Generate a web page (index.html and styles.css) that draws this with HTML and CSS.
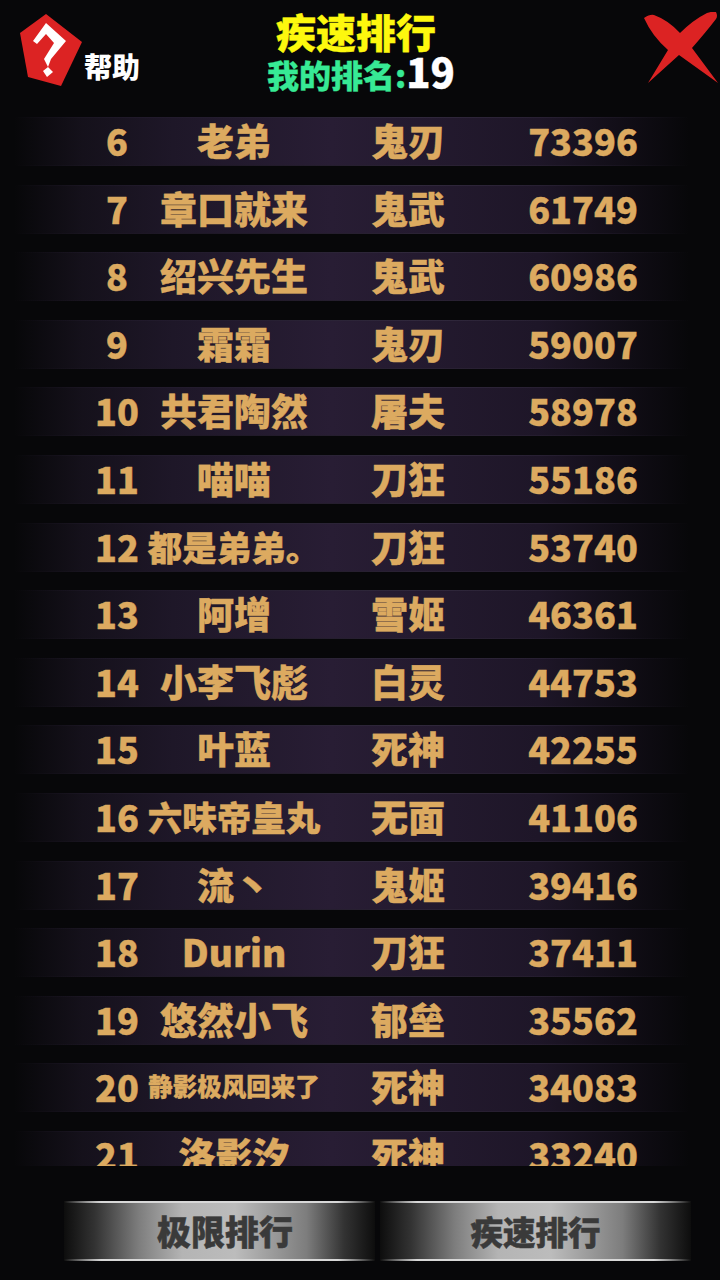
FILE: index.html
```html
<!DOCTYPE html>
<html lang="zh-CN">
<head>
<meta charset="utf-8">
<meta name="viewport" content="width=device-width, initial-scale=1">
<title>疾速排行</title>
<link rel="stylesheet" href="styles.css">
</head>
<body>

<div class="header">
  <div class="help">
    <svg class="help-icon" width="62" height="72" viewBox="20 14 62 72">
      <polygon points="46,14 82,42 61,86 28,77 20,33" fill="#dc2323"/>
      <path d="M33 41 L46 23 L66 41 L51 59 L48 67 L44 59 L54 43 L46 34 L37 44 Z" fill="#fff"/>
      <polygon points="48,67 53,72 47,77 43,71" fill="#fff"/>
    </svg>
    <span class="help-text">帮助</span>
  </div>
  <div class="title-box">
    <div class="title">疾速排行</div>
    <div class="my-rank">我的排名:<span class="my-rank-num">19</span></div>
  </div>
  <svg class="close" width="76" height="72" viewBox="644 12 76 72">
    <path d="M644 18 Q650 14 654 15 Q668 20 680 33 Q693 20 707 13 Q713 11 716 12 Q718 16 716 19 Q706 32 692 48 L718 83 L679 55 L648 83 L668 50 Q652 36 644 18 Z" fill="#dc2323"/>
  </svg>
</div>

<div class="list">
  <div class="row"><span class="rank">6</span><span class="name">老弟</span><span class="job">鬼刃</span><span class="score">73396</span></div>
  <div class="row"><span class="rank">7</span><span class="name">章口就来</span><span class="job">鬼武</span><span class="score">61749</span></div>
  <div class="row"><span class="rank">8</span><span class="name">绍兴先生</span><span class="job">鬼武</span><span class="score">60986</span></div>
  <div class="row"><span class="rank">9</span><span class="name">霜霜</span><span class="job">鬼刃</span><span class="score">59007</span></div>
  <div class="row"><span class="rank">10</span><span class="name">共君陶然</span><span class="job">屠夫</span><span class="score">58978</span></div>
  <div class="row"><span class="rank">11</span><span class="name">喵喵</span><span class="job">刀狂</span><span class="score">55186</span></div>
  <div class="row"><span class="rank">12</span><span class="name name-m">都是弟弟。</span><span class="job">刀狂</span><span class="score">53740</span></div>
  <div class="row"><span class="rank">13</span><span class="name">阿增</span><span class="job">雪姬</span><span class="score">46361</span></div>
  <div class="row"><span class="rank">14</span><span class="name">小李飞彪</span><span class="job">白灵</span><span class="score">44753</span></div>
  <div class="row"><span class="rank">15</span><span class="name">叶蓝</span><span class="job">死神</span><span class="score">42255</span></div>
  <div class="row"><span class="rank">16</span><span class="name name-m">六味帝皇丸</span><span class="job">无面</span><span class="score">41106</span></div>
  <div class="row"><span class="rank">17</span><span class="name">流丶</span><span class="job">鬼姬</span><span class="score">39416</span></div>
  <div class="row"><span class="rank">18</span><span class="name">Durin</span><span class="job">刀狂</span><span class="score">37411</span></div>
  <div class="row"><span class="rank">19</span><span class="name">悠然小飞</span><span class="job">郁垒</span><span class="score">35562</span></div>
  <div class="row"><span class="rank">20</span><span class="name name-s">静影极风回来了</span><span class="job">死神</span><span class="score">34083</span></div>
  <div class="row"><span class="rank">21</span><span class="name">洛影汐</span><span class="job">死神</span><span class="score">33240</span></div>
</div>

<div class="tabs">
  <div class="tab tab-left">极限排行</div>
  <div class="tab tab-right">疾速排行</div>
</div>

</body>
</html>
```

FILE: styles.css
```css
* { box-sizing: border-box; }
html, body { height: 100%; }
body {
  margin: 0;
  width: 720px;
  height: 1280px;
  overflow: hidden;
  background: #070709;
  font-family: "Noto Sans CJK SC", "Noto Sans", sans-serif;
  font-weight: 900;
}

.header {
  display: grid;
  grid-template-columns: 236px 240px 1fr;
  height: 111px;
}
.help {
  display: flex;
  align-items: flex-start;
  padding: 14px 0 0 20px;
}
.help-text {
  margin: 34px 0 0 2px;
  font-size: 28px;
  line-height: 36px;
  color: #fff;
}
.title-box { text-align: center; }
.title {
  margin-top: 8px;
  font-size: 40px;
  line-height: 46px;
  color: #fdf80e;
  -webkit-text-stroke: 0.4px #fdf80e;
}
.my-rank {
  margin-top: -3px;
  padding-left: 10px;
  font-size: 32px;
  line-height: 40px;
  color: #37ea95;
  white-space: nowrap;
  -webkit-text-stroke: 0.3px #37ea95;
}
.my-rank-num {
  font-size: 40px;
  color: #fff;
  -webkit-text-stroke: 0.3px #fff;
}
.close { justify-self: end; margin-top: 12px; }

.list {
  display: flex;
  flex-direction: column;
  gap: 18.6px;
  height: 1055px;
  padding-top: 6px;
  overflow: hidden;
}
.row {
  flex: none;
  display: grid;
  grid-template-columns: 90px 54px 180px 36px 96px 54px 146px;
  align-items: center;
  width: 690px;
  height: 49px;
  padding-bottom: 3px;
  font-size: 36px;
  line-height: 46px;
  color: #dcaa60;
  text-align: center;
  -webkit-text-stroke: 0.4px #dcaa60;
  background:
    linear-gradient(90deg, #07070900 2%, #231c2e 30%, #30283c 60%, #07070900 100%) top / 100% 1px no-repeat,
    linear-gradient(90deg, #07070900 2%, #1e1826 30%, #2a2234 60%, #07070900 100%) bottom / 100% 1px no-repeat,
    linear-gradient(90deg, #07070900 2%, #15111b 12%, #1e1728 25%, #281d34 48%, #1e1628 78%, #07070900 100%);
}
.rank { grid-column: 2; white-space: nowrap; }
.name { grid-column: 3; white-space: nowrap; font-size: 37px; }
.name-m { font-size: 34.5px; }
.name-s { font-size: 24.5px; }
.job { grid-column: 5; white-space: nowrap; font-size: 37px; }
.score { grid-column: 7; }

.tabs {
  display: flex;
  gap: 5px;
  margin: 35px 0 0 64px;
}
.tab {
  width: 311px;
  height: 60px;
  line-height: 56px;
  text-align: center;
  color: #3a3a3a;
  -webkit-text-stroke: 0.5px #3a3a3a;
  border-top: 2px solid transparent;
  border-bottom: 2px solid transparent;
  background:
    linear-gradient(90deg, #0a0a0a00 0%, #d8d8d8 12%, #d8d8d8 88%, #0a0a0a00 100%) top / 100% 2px no-repeat border-box,
    linear-gradient(90deg, #0a0a0a00 0%, #d8d8d8 12%, #d8d8d8 88%, #0a0a0a00 100%) bottom / 100% 2px no-repeat border-box,
    linear-gradient(90deg, #0d0d0d 0%, #333 10%, #7d7d7d 24%, #b4b4b4 38%, #bcbcbc 55%, #7d7d7d 78%, #333 90%, #0d0d0d 100%) border-box;
}
.tab-left { padding-left: 11px; font-size: 34px; }
.tab-right { font-size: 32.5px; }
```
